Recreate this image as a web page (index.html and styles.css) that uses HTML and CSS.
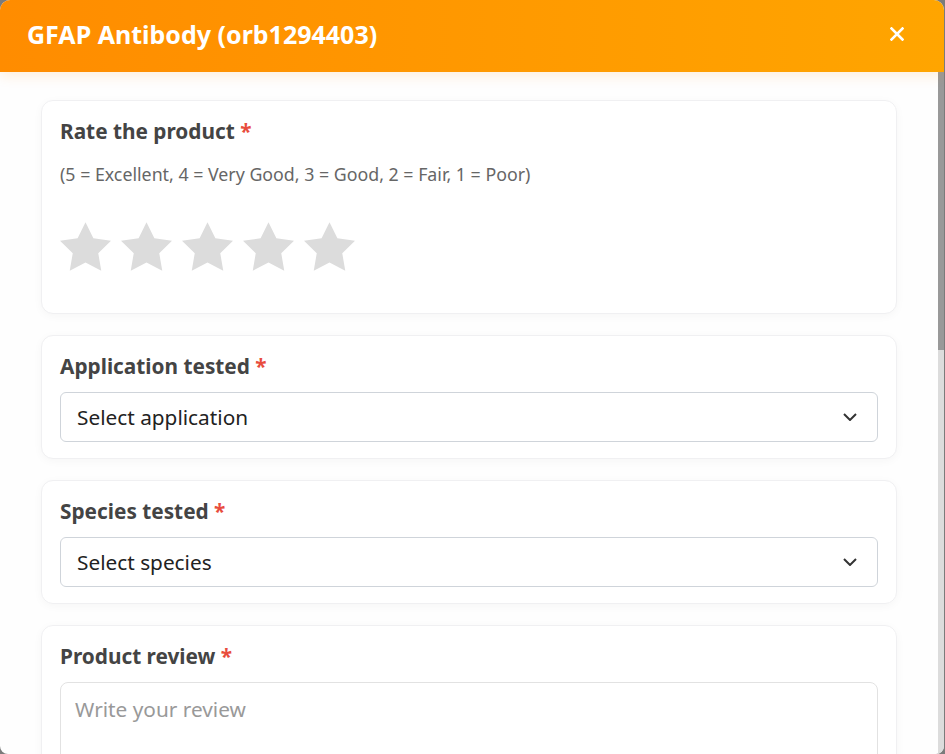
FILE: index.html
```html
<!DOCTYPE html>
<html lang="en">
<head>
<meta charset="utf-8">
<title>GFAP Antibody review</title>
<link rel="stylesheet" href="styles.css">
</head>
<body>
<div class="modal">
  <header class="modal-header">
    <h1 class="modal-title">GFAP Antibody (orb1294403)</h1>
    <button class="close-btn" aria-label="Close">
      <svg width="14" height="14" viewBox="0 0 14 14"><path d="M1.5 1.5 L12.5 12.5 M12.5 1.5 L1.5 12.5" stroke="#fff" stroke-width="2.6" stroke-linecap="square"/></svg>
    </button>
  </header>
  <div class="modal-main">
    <div class="modal-body">
      <section class="card">
        <div class="label">Rate the product <span class="req">*</span></div>
        <div class="hint">(5 = Excellent, 4 = Very Good, 3 = Good, 2 = Fair, 1 = Poor)</div>
        <div class="stars">
          <svg class="star" viewBox="2 2 20 19.02"><polygon points="12,2 15.09,8.26 22,9.27 17,14.14 18.18,21.02 12,17.77 5.82,21.02 7,14.14 2,9.27 8.91,8.26"/></svg>
          <svg class="star" viewBox="2 2 20 19.02"><polygon points="12,2 15.09,8.26 22,9.27 17,14.14 18.18,21.02 12,17.77 5.82,21.02 7,14.14 2,9.27 8.91,8.26"/></svg>
          <svg class="star" viewBox="2 2 20 19.02"><polygon points="12,2 15.09,8.26 22,9.27 17,14.14 18.18,21.02 12,17.77 5.82,21.02 7,14.14 2,9.27 8.91,8.26"/></svg>
          <svg class="star" viewBox="2 2 20 19.02"><polygon points="12,2 15.09,8.26 22,9.27 17,14.14 18.18,21.02 12,17.77 5.82,21.02 7,14.14 2,9.27 8.91,8.26"/></svg>
          <svg class="star" viewBox="2 2 20 19.02"><polygon points="12,2 15.09,8.26 22,9.27 17,14.14 18.18,21.02 12,17.77 5.82,21.02 7,14.14 2,9.27 8.91,8.26"/></svg>
        </div>
      </section>

      <section class="card">
        <div class="label">Application tested <span class="req">*</span></div>
        <div class="select">
          <span>Select application</span>
          <svg width="14" height="8" viewBox="0 0 14 8"><path d="M1 1 L7 7 L13 1" fill="none" stroke="#333" stroke-width="2"/></svg>
        </div>
      </section>

      <section class="card">
        <div class="label">Species tested <span class="req">*</span></div>
        <div class="select">
          <span>Select species</span>
          <svg width="14" height="8" viewBox="0 0 14 8"><path d="M1 1 L7 7 L13 1" fill="none" stroke="#333" stroke-width="2"/></svg>
        </div>
      </section>

      <section class="card">
        <div class="label">Product review <span class="req">*</span></div>
        <textarea class="textarea" placeholder="Write your review"></textarea>
      </section>
    </div>
    <div class="scrollbar">
      <div class="scrollbar-thumb"></div>
    </div>
  </div>
</div>
</body>
</html>
```

FILE: styles.css
```css
* { box-sizing: border-box; }

html, body {
  margin: 0;
  height: 100%;
}

body {
  background: #7b7b7b;
  font-family: "Noto Sans", "Open Sans", sans-serif;
  overflow: hidden;
}

.modal {
  width: 944px;
  height: 754px;
  background: #fefefe;
  border-radius: 10px 10px 8px 8px;
  overflow: hidden;
  display: flex;
  flex-direction: column;
}

.modal-header {
  flex: 0 0 72px;
  display: flex;
  align-items: center;
  justify-content: space-between;
  padding: 0 40px 4px 27px;
  background: linear-gradient(90deg, #ff8c00 0%, #ffa500 100%);
  box-shadow: 0 4px 12px rgba(255, 140, 0, 0.14);
  position: relative;
  z-index: 1;
}

.modal-title {
  margin: 0;
  font-size: 25px;
  font-weight: 700;
  color: #fff;
}

.close-btn {
  background: none;
  border: 0;
  padding: 0;
  width: 14px;
  height: 14px;
  display: flex;
  cursor: pointer;
}

.modal-main {
  flex: 1 1 auto;
  min-height: 0;
  display: flex;
}

.modal-body {
  flex: 1 1 auto;
  overflow: hidden;
  padding: 28px 41px 40px 41px;
  display: flex;
  flex-direction: column;
  gap: 21px;
}

.scrollbar {
  flex: 0 0 6px;
  background: #dcdcdc;
}

.scrollbar-thumb {
  height: 278px;
  background: #999;
}

.card {
  flex: 0 0 auto;
  background: #fff;
  border: 1px solid #f0f0f2;
  border-radius: 12px;
  box-shadow: 0 2px 10px rgba(0, 0, 0, 0.035);
  padding: 16px 18px;
}

.label {
  font-size: 20.8px;
  font-weight: 700;
  color: #444;
  margin-bottom: 12px;
}

.req {
  color: #e84c3d;
}

.hint {
  font-size: 17.8px;
  color: #666;
  margin-top: 17px;
}

.stars {
  display: flex;
  gap: 10px;
  margin: 36px 0 26px;
}

.star {
  width: 51px;
  height: 49px;
  fill: #dcdcdc;
}

.select {
  height: 50px;
  border: 1px solid #cfd4da;
  border-radius: 6px;
  padding: 0 20px 0 16px;
  display: flex;
  align-items: center;
  justify-content: space-between;
  font-size: 20.8px;
  color: #222;
  background: #fff;
}

.textarea {
  display: block;
  width: 100%;
  height: 150px;
  border: 1px solid #e2e2e2;
  border-radius: 8px;
  padding: 12px 14px;
  font-family: inherit;
  font-size: 20.8px;
  color: #222;
  resize: none;
}
.textarea::placeholder { color: #999; }
```
